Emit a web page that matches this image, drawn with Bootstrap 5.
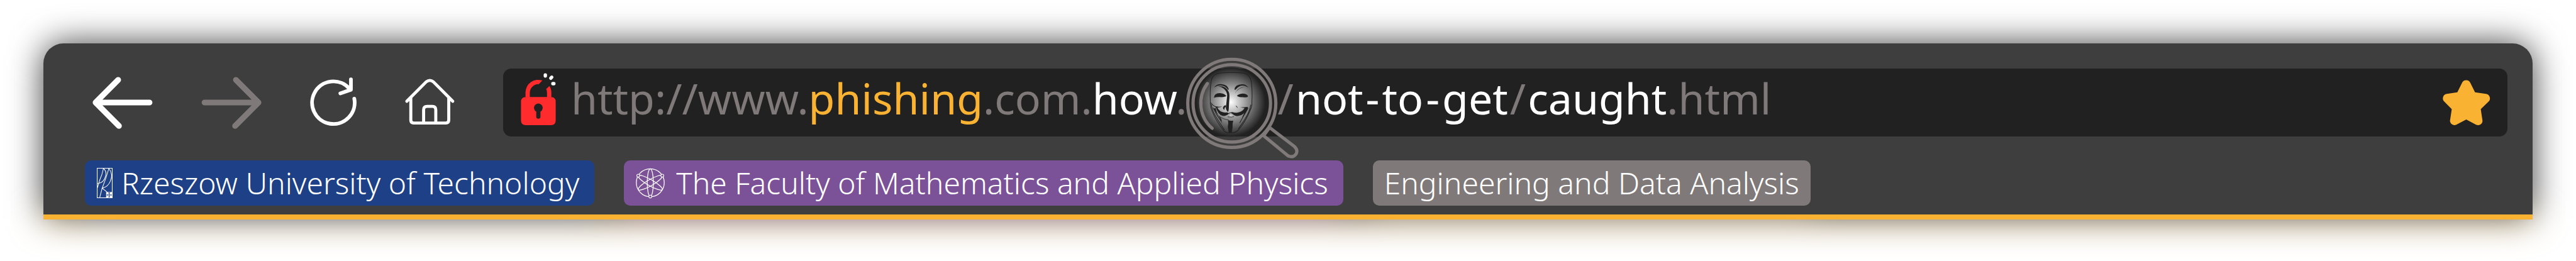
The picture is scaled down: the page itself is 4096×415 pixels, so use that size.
<!DOCTYPE html>
<html lang="en">
<head>
<meta charset="utf-8">
<meta name="viewport" content="width=device-width, initial-scale=1">
<title>How not to get caught</title>
<link href="https://cdn.jsdelivr.net/npm/bootstrap@5.3.0/dist/css/bootstrap.min.css" rel="stylesheet">
<style>
  :root { --shell: #3e3e3e; --field: #212121; --muted: #7f7a79; --amber: #fab232; --blue: #1d4086; --violet: #7b5297; }
  body { background: #fff; font-family: "Noto Sans", "Open Sans", sans-serif; padding: 69px 69px 64px; overflow-x: hidden; }
  svg { display: block; overflow: visible; flex: none; }
  .shell { position: relative; z-index: 0; padding: 40px 40px 22px 66px; }
  .glow, .shell-face { position: absolute; inset: 0; background-color: var(--shell); border-radius: 32px 32px 0 0; border-bottom: 8px solid var(--amber); }
  .shell-face { z-index: -1; }
  /* soft glow that picks up the colours of the bar itself */
  .glow { z-index: -2; filter: blur(27px);
    background-image: linear-gradient(var(--blue), var(--blue)), linear-gradient(var(--violet), var(--violet)), linear-gradient(var(--muted), var(--muted));
    background-position: 66px 186px, 924px 186px, 2113px 186px; background-size: 812px 72px, 1143px 72px, 698px 72px; background-repeat: no-repeat; }
  .tools { gap: 77px; padding-left: 12px; margin-bottom: 38px; }
  .tool { border: 0; background: none; padding: 0; color: #fff; }
  .tool:disabled { color: var(--muted); }
  .address { background: var(--field); border-radius: 13px; height: 108px; padding: 0 28px; min-width: 0; }
  .lock { margin-right: 24px; }
  .url { font-size: 68px; line-height: 92px; padding-bottom: 14px; color: var(--muted); white-space: nowrap; }
  .url b { font-weight: 400; color: #fff; }
  .url .site { color: var(--amber); }
  .url .dash { padding: 0 4px; }
  .url .sep { padding: 0 3px; }
  .lens-slot { width: 141px; flex: none; }
  .lens { position: absolute; left: -2px; top: -17px; }
  .marks { gap: 47px; }
  .bookmark { height: 72px; border-radius: 10px; font-size: 48px; line-height: 72px; font-weight: 300; color: #fff; gap: 14px; padding: 0 24px 0 19px; white-space: nowrap; text-decoration: none; }
  .bookmark.rut { background: var(--blue); }
  .bookmark.faculty { background: var(--violet); gap: 18px; }
  .bookmark.course { background: var(--muted); padding: 0 18px; }
</style>
</head>
<body>
<main class="shell">
  <div class="glow"></div>
  <div class="shell-face"></div>
  <nav class="tools d-flex align-items-center" aria-label="Browser controls">
    <button class="tool" type="button" aria-label="Back">
      <svg width="96" height="84" viewBox="34 24 376 330" fill="none" stroke="currentColor" stroke-width="36" stroke-linecap="round" stroke-linejoin="round"><path d="M194 48 53 189 199 335M53 189H390"/></svg>
    </button>
    <button class="tool" type="button" aria-label="Forward" disabled>
      <svg width="96" height="84" viewBox="708 24 376 330" fill="none" stroke="currentColor" stroke-width="36" stroke-linecap="round" stroke-linejoin="round"><path d="M924 48 1065 189 919 335M1065 189H728"/></svg>
    </button>
    <button class="tool" type="button" aria-label="Reload">
      <svg width="74" height="84" viewBox="36 24 290 330" fill="none" stroke="currentColor" stroke-width="23" stroke-linecap="round" stroke-linejoin="round"><path d="M312 165A133 133 0 1 1 281 102"/><path d="M291 44V109L225 132"/></svg>
    </button>
    <button class="tool" type="button" aria-label="Home">
      <svg width="79" height="84" viewBox="632 24 308 330" fill="none" stroke="currentColor" stroke-width="19" stroke-linecap="round" stroke-linejoin="round"><path d="M642 181 763 60Q786 42 808 60L929 181M667 160V299Q667 317 685 317H886Q904 317 904 299V160M747 315V235Q747 213 769 213H801Q823 213 823 235V315"/></svg>
    </button>
    <div class="address d-flex align-items-center flex-grow-1">
      <svg width="56" height="94" viewBox="118 65 218 368" class="lock" aria-label="Not secure" role="img">
        <path fill="#ff2b2c" d="M147 217V186A79 79 0 0 1 252 112L229 135A53 53 0 0 0 174 188V217ZM281 217V188Q281 176 276 165L296 146Q308 164 308 188V217Z"/>
        <path fill="#ff2b2c" fill-rule="evenodd" d="M149 215H306Q335 215 335 245V360Q335 390 306 390H149Q119 390 119 360V245Q119 215 149 215ZM214 306V337A13 13 0 0 0 240 337V306A27 27 0 1 0 214 306Z"/>
        <g fill="#fff"><rect x="260" y="67" width="21" height="27" rx="10"/><rect x="297" y="80" width="21" height="29" rx="10" transform="rotate(45 307.500 94.500)"/><rect x="307" y="121" width="27" height="21" rx="10"/></g>
      </svg>
      <span class="url">http://www.<b class="site">phishing</b>.com.<b>how</b>.</span>
      <span class="lens-slot position-relative align-self-stretch">
        <svg class="lens" width="179" height="160" viewBox="248 120 700 626" fill="none" role="img" aria-label="Masked face under a magnifying glass">
          <defs><radialGradient id="spot" gradientUnits="userSpaceOnUse" cx="526" cy="395" r="215"><stop offset="0" stop-color="#fff"/><stop offset=".2" stop-color="#cfcfcf"/><stop offset="1" stop-color="#212121"/></radialGradient></defs>
          <circle cx="526" cy="395" r="215" fill="url(#spot)"/>
          <g stroke="#7f7a79" stroke-width="20" stroke-linecap="round" stroke-linejoin="round">
            <circle cx="532" cy="403" r="274"/><circle cx="532" cy="403" r="241"/>
            <path d="M380 280A206 206 0 0 0 410 558"/>
            <path d="M767 553 922 672Q944 693 933 716 915 744 883 730L730 604Z"/>
          </g>
          <g transform="translate(360 195)" fill="#212121" stroke-linejoin="round" stroke-linecap="round">
            <path fill="none" stroke="#212121" stroke-width="4" d="M38 198Q35 110 45 63 55 25 95 20 170 12 245 20 285 28 293 70 301 130 297 200 300 225 285 255 262 315 215 372 190 395 165 390 140 395 122 378 75 320 50 258 36 222 38 198M42 205Q62 232 85 232M45 215Q50 260 85 310L125 372M290 218Q283 262 250 312L213 366M56 236Q75 280 105 318M272 240Q245 285 222 329"/>
            <path d="M62 109Q75 88 104 88 145 90 153 119L150 126Q138 106 118 99 90 91 62 109ZM276 111Q262 88 235 89 192 92 189 120L192 126Q207 107 224 100 248 91 276 111Z"/>
            <path d="M88 101Q137 98 153 137 159 150 157 175L153 245Q150 267 144 258L138 248 135 238 140 190 143 165Q145 135 122 117 108 104 88 101ZM253 105Q203 112 192 149 200 118 253 105ZM61 173Q61 145 98 144 125 145 138 162 132 170 100 169 75 168 61 173ZM273 165Q269 147 238 147 214 150 204 161 212 170 240 170 270 173 273 165ZM135 219Q118 222 117 238 120 248 127 248 124 233 135 231ZM195 223Q207 222 208 239 203 228 195 223Z"/>
            <path d="M70 226Q94 232 114 226 97 235 82 234 96 264 130 265 145 262 152 269 161 262 177 262 186 268 205 266 237 262 252 237 240 236 225 231 250 233 273 230 257 280 210 287 189 287 180 276L165 267 150 275Q138 287 116 286 87 280 70 226Z"/>
            <path d="M165 274 153 290H181Z" fill="#c9c9c9"/>
            <path d="M148 292Q170 296 184 291M90 285Q115 307 150 311" stroke="#212121" stroke-width="3" fill="none"/>
            <path d="M148 312Q165 319 181 315 175 335 177 356L172 390Q162 394 153 389L147 354Q153 330 148 312ZM88 285Q103 295 108 309L110 335Q101 302 88 285ZM60 242Q80 275 92 292 76 260 70 235ZM274 234Q258 278 235 297 250 272 261 240Z"/>
          </g>
        </svg>
      </span>
      <span class="url"><span class="sep">/</span><b>not<span class="dash">-</span>to<span class="dash">-</span>get</b><span class="sep">/</span><b>caught</b>.html</span>
      <button class="tool ms-auto" type="button" aria-label="Bookmark this page">
        <svg width="75" height="73" viewBox="497 480 296 286" fill="#fab232"><path d="M619 497A28 28 0 0 1 670 497L700 557 768 567A28 28 0 0 1 784 616L736 662 747 735A28 28 0 0 1 706 760L645 728 583 760A28 28 0 0 1 543 735L554 662 506 614A28 28 0 0 1 523 567L589 557Z"/></svg>
      </button>
    </div>
  </nav>
  <nav class="marks d-flex" aria-label="Bookmarks">
    <a class="bookmark rut d-flex align-items-center" href="#rut">
      <svg width="25" height="48" viewBox="117 89 98 189" fill="none" stroke="#fff" stroke-width="4"><path d="M119 91H213V276H119ZM157 92Q180 110 172 138 162 184 121 187M158 92Q151 130 133 170L121 212M192 92Q176 150 150 216L135 274M192 92Q220 130 202 170 187 208 150 216L181 240"/><path d="M175 240H213V276H175Z" fill="#fff" stroke="none"/><path d="M194 245V271M181 258H207M189 245H199M189 271H199M181 253V263M207 253V263" stroke="#1d4086"/></svg>
      <span>Rzeszow University of Technology</span>
    </a>
    <a class="bookmark faculty d-flex align-items-center" href="#faculty">
      <svg width="46" height="48" viewBox="92 89 180 188" fill="none" stroke="#fff" stroke-width="5"><circle cx="182" cy="181" r="87"/><ellipse cx="182" cy="181" rx="19" ry="86"/><ellipse cx="182" cy="181" rx="19" ry="86" transform="rotate(60 182 181)"/><ellipse cx="182" cy="181" rx="19" ry="86" transform="rotate(-60 182 181)"/><g fill="#7b5297" stroke-width="4"><circle cx="107" cy="137" r="9"/><circle cx="257" cy="137" r="9"/><circle cx="182" cy="267" r="9"/></g></svg>
      <span>The Faculty of Mathematics and Applied Physics</span>
    </a>
    <a class="bookmark course d-flex align-items-center" href="#course">Engineering and Data Analysis</a>
  </nav>
</main>
<script src="https://cdn.jsdelivr.net/npm/bootstrap@5.3.0/dist/js/bootstrap.bundle.min.js"></script>
</body>
</html>
